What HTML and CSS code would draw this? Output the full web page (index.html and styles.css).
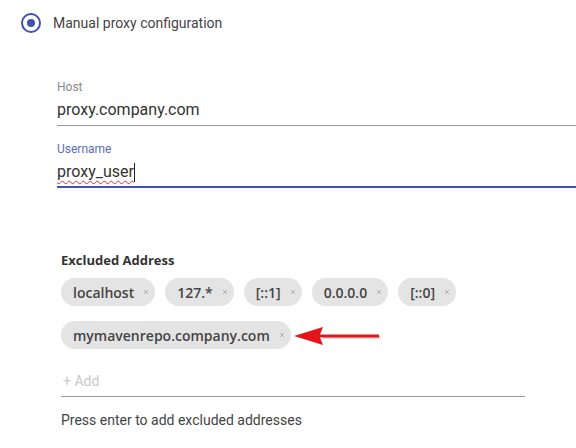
FILE: index.html
```html
<!DOCTYPE html>
<html>
<head>
<meta charset="utf-8">
<link rel="stylesheet" href="styles.css">
</head>
<body>
<div class="radio-row">
  <span class="radio"><span class="radio-dot"></span></span>
  <span class="radio-label">Manual proxy configuration</span>
</div>

<div class="fields">
  <div class="field">
    <div class="field-label">Host</div>
    <div class="field-value">proxy.company.com</div>
  </div>
  <div class="field focused">
    <div class="field-label">Username</div>
    <div class="field-value"><span class="spell">proxy_user</span><span class="caret"></span></div>
  </div>
</div>

<div class="excluded">
  <div class="excluded-title">Excluded Address</div>
  <div class="chips">
    <span class="chip">localhost<span class="chip-x"><svg viewBox="0 0 6 6" width="6" height="6"><path d="M1 1L5 5M5 1L1 5" stroke="#b0b0b0" stroke-width="1"/></svg></span></span>
    <span class="chip">127.*<span class="chip-x"><svg viewBox="0 0 6 6" width="6" height="6"><path d="M1 1L5 5M5 1L1 5" stroke="#b0b0b0" stroke-width="1"/></svg></span></span>
    <span class="chip">[::1]<span class="chip-x"><svg viewBox="0 0 6 6" width="6" height="6"><path d="M1 1L5 5M5 1L1 5" stroke="#b0b0b0" stroke-width="1"/></svg></span></span>
    <span class="chip">0.0.0.0<span class="chip-x"><svg viewBox="0 0 6 6" width="6" height="6"><path d="M1 1L5 5M5 1L1 5" stroke="#b0b0b0" stroke-width="1"/></svg></span></span>
    <span class="chip">[::0]<span class="chip-x"><svg viewBox="0 0 6 6" width="6" height="6"><path d="M1 1L5 5M5 1L1 5" stroke="#b0b0b0" stroke-width="1"/></svg></span></span>
    <span class="chip chip-marked">mymavenrepo.company.com<span class="chip-x"><svg viewBox="0 0 6 6" width="6" height="6"><path d="M1 1L5 5M5 1L1 5" stroke="#b0b0b0" stroke-width="1"/></svg></span>
      <svg class="arrow" width="92" height="24" viewBox="0 0 92 24">
        <path d="M30 13.5 L88 13.5" stroke="#9a9a9a" stroke-opacity="0.35" stroke-width="3"/>
        <path d="M1 12 L30 3 L27 10.5 L86 10.5 L86 13.5 L27 13.5 L30 21 Z" fill="#e5141b"/>
      </svg>
    </span>
  </div>
  <div class="add-input">+ Add</div>
  <div class="help">Press enter to add excluded addresses</div>
</div>
</body>
</html>
```

FILE: styles.css
```css
html, body {
  margin: 0;
  padding: 0;
  background: #ffffff;
}

body {
  font-family: Roboto, "Liberation Sans", sans-serif;
  color: #333333;
  width: 576px;
  height: 448px;
  overflow: hidden;
}

.radio-row {
  display: flex;
  align-items: center;
  gap: 12px;
  height: 44px;
  padding-top: 1px;
  padding-left: 21px;
  box-sizing: border-box;
}

.radio {
  width: 20px;
  height: 20px;
  box-sizing: border-box;
  border: 2px solid #3f51b5;
  border-radius: 50%;
  display: flex;
  align-items: center;
  justify-content: center;
}

.radio-dot {
  width: 8px;
  height: 8px;
  border-radius: 50%;
  background: #3f51b5;
}

.radio-label {
  font-size: 14px;
  color: #444444;
}

.fields {
  margin-left: 57px;
  margin-top: 36px;
  display: flex;
  flex-direction: column;
  gap: 16px;
}

.field {
  border-bottom: 1px solid #999999;
  padding-bottom: 5px;
}

.field.focused {
  border-bottom: 2px solid #3f51b5;
  padding-bottom: 4px;
}

.field-label {
  font-size: 12px;
  line-height: 14px;
  color: #8a8a8a;
}

.focused .field-label {
  color: #5c6bc0;
}

.field-value {
  margin-top: 6px;
  font-size: 16px;
  line-height: 20px;
  color: #333333;
  display: flex;
  align-items: center;
}

.spell {
  text-decoration: underline wavy #e0302a;
  text-decoration-thickness: 1px;
  text-underline-offset: 3px;
  text-decoration-skip-ink: none;
}

.caret {
  display: inline-block;
  width: 1px;
  height: 19px;
  background: #222222;
}

.excluded {
  margin-left: 61px;
  width: 464px;
  margin-top: 63px;
}

.excluded-title {
  font-family: "Open Sans", sans-serif;
  font-weight: 700;
  font-size: 13px;
  line-height: 18px;
  color: #333333;
}

.chips {
  margin-top: 9px;
  display: flex;
  flex-wrap: wrap;
  gap: 15px 10px;
}

.chip {
  position: relative;
  display: inline-flex;
  align-items: center;
  height: 28px;
  padding: 0 6px 0 12px;
  border-radius: 14px;
  background: #e4e4e4;
  font-family: "Open Sans", sans-serif;
  font-weight: 600;
  font-size: 14px;
  color: #444444;
}

.chip-x {
  display: inline-flex;
  margin-left: 9px;
}

.arrow {
  position: absolute;
  left: 100%;
  top: 3px;
  margin-left: 2px;
}

.add-input {
  margin-top: 22px;
  font-size: 14px;
  line-height: 20px;
  color: #c8c8c8;
  padding: 0 2px 5px;
  border-bottom: 1px solid #999999;
}

.help {
  margin-top: 13px;
  font-size: 14px;
  line-height: 20px;
  color: #444444;
}
```
